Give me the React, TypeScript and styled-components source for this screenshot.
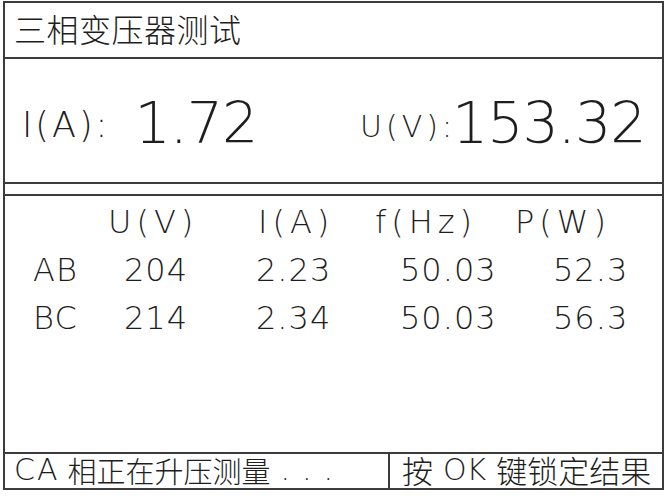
import React from "react";
import styled, { createGlobalStyle } from "styled-components";

const GlobalStyle = createGlobalStyle`
  html, body {
    margin: 0;
    padding: 0;
    background: #ffffff;
  }
`;

const LINE = "#3c3c3c";

const Frame = styled.div`
  margin: 1px 0 0 3px;
  width: 657px;
  border: 2px solid ${LINE};
  color: #1e1e1e;
  display: flex;
  flex-direction: column;
`;

const Header = styled.div`
  height: 56px;
  border-bottom: 2px solid ${LINE};
  display: flex;
  align-items: center;
  padding: 0 0 5px 9px;
  box-sizing: border-box;
  font-family: "Noto Sans CJK SC", sans-serif;
  font-weight: 300;
  font-size: 32px;
  letter-spacing: 0.5px;
`;

const MeasureRow = styled.div`
  height: 125px;
  box-sizing: border-box;
  border-bottom: 2px solid ${LINE};
  display: flex;
  align-items: center;
  padding-left: 17px;
  font-family: "DejaVu Sans", sans-serif;
  font-weight: 200;
`;

const Gap = styled.div`
  height: 12px;
  box-sizing: border-box;
  border-bottom: 2px solid ${LINE};
`;

const Group = styled.div<{ $width?: number }>`
  white-space: nowrap;
  padding-top: 4px;
  width: ${(p) => (p.$width ? `${p.$width}px` : "auto")};
`;

const Label = styled.span<{ $size: number; $spacing: number; $gap: number }>`
  font-size: ${(p) => p.$size}px;
  letter-spacing: ${(p) => p.$spacing}px;
  margin-right: ${(p) => p.$gap}px;
  vertical-align: 6px;
`;

const BigValue = styled.span`
  font-size: 57px;
  letter-spacing: -1px;
`;

const Table = styled.div`
  height: 256px;
  display: flex;
  flex-direction: column;
  padding-top: 2px;
  box-sizing: border-box;
  font-family: "DejaVu Sans", sans-serif;
  font-weight: 200;
  font-size: 32px;
`;

const Row = styled.div<{ $cols: string; $indent: number; $spacing: number }>`
  display: grid;
  grid-template-columns: ${(p) => p.$cols};
  padding-left: ${(p) => p.$indent}px;
  letter-spacing: ${(p) => p.$spacing}px;
  line-height: 48px;
  height: 48px;
`;

const Footer = styled.div`
  height: 36px;
  box-sizing: border-box;
  border-top: 2px solid ${LINE};
  display: flex;
  font-family: "Noto Sans CJK SC", sans-serif;
  font-weight: 300;
`;

const FooterCell = styled.div<{ $width?: number; $size: number }>`
  display: flex;
  align-items: center;
  font-size: ${(p) => p.$size}px;
  padding-left: ${(p) => (p.$width ? 9 : 12)}px;
  width: ${(p) => (p.$width ? `${p.$width}px` : "auto")};
  flex: ${(p) => (p.$width ? "none" : "1")};
  border-right: ${(p) => (p.$width ? `2px solid ${LINE}` : "none")};
  white-space: nowrap;
  line-height: 34px;
  padding-bottom: 2px;
  box-sizing: border-box;
`;

const Stroke = styled.span<{ $before?: number; $after?: number; $spacing?: number }>`
  font-family: "DejaVu Sans", sans-serif;
  font-weight: 200;
  font-size: 30px;
  margin-left: ${(p) => p.$before ?? 0}px;
  margin-right: ${(p) => p.$after ?? 0}px;
  letter-spacing: ${(p) => p.$spacing ?? 0}px;
`;

const headerCols = "150px 117px 140px auto";
const dataCols = "91px 132px 144px 153px auto";

const rows = [
  ["AB", "204", "2.23", "50.03", "52.3"],
  ["BC", "214", "2.34", "50.03", "56.3"],
];

export default function App() {
  return (
    <>
      <GlobalStyle />
      <Frame>
        <Header>三相变压器测试</Header>
        <MeasureRow>
          <Group $width={338}>
            <Label $size={35} $spacing={3} $gap={24}>
              I(A):
            </Label>
            <BigValue>1.72</BigValue>
          </Group>
          <Group>
            <Label $size={30} $spacing={4} $gap={-4}>
              U(V):
            </Label>
            <BigValue>153.32</BigValue>
          </Group>
        </MeasureRow>
        <Gap />
        <Table>
          <Row $cols={headerCols} $indent={103} $spacing={5}>
            <span>U(V)</span>
            <span>I(A)</span>
            <span>f(Hz)</span>
            <span>P(W)</span>
          </Row>
          {rows.map((r) => (
            <Row key={r[0]} $cols={dataCols} $indent={28} $spacing={1}>
              {r.map((c, i) => (
                <span key={i}>{c}</span>
              ))}
            </Row>
          ))}
        </Table>
        <Footer>
          <FooterCell $width={385} $size={29}>
            <Stroke $after={8} $spacing={2}>
              CA
            </Stroke>
            相正在升压测量
            <Stroke $before={10} $spacing={12}>
              ...
            </Stroke>
          </FooterCell>
          <FooterCell $size={31}>
            按
            <Stroke $before={10} $after={10}>
              OK
            </Stroke>
            键锁定结果
          </FooterCell>
        </Footer>
      </Frame>
    </>
  );
}
